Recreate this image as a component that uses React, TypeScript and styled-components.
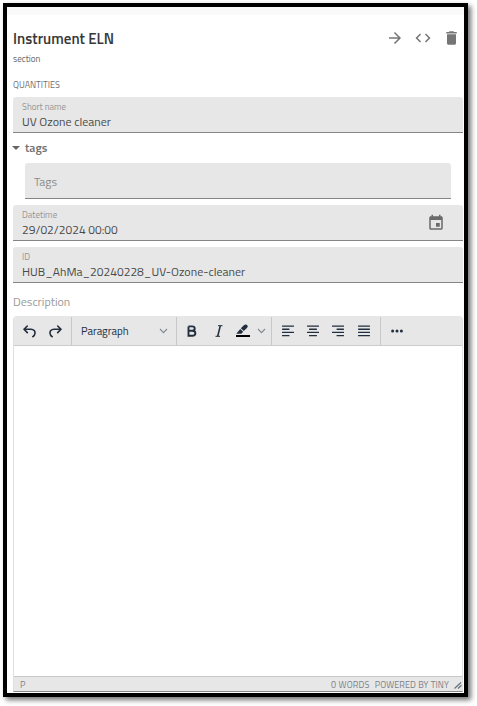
import React from "react";
import styled, { createGlobalStyle } from "styled-components";

const GlobalStyle = createGlobalStyle`
  body { margin: 0; background: #fff; }
  * { box-sizing: border-box; }
`;

const Page = styled.div`
  width: 477px;
  height: 706px;
  padding: 3px;
  overflow: hidden;
  background: #fff;
  font-family: "Titillium Web", Roboto, sans-serif;
`;

const Frame = styled.main`
  width: 465px;
  height: 694px;
  border: 4px solid #000;
  background: #fff;
  box-shadow: 3px 3px 5px rgba(0, 0, 0, 0.55);
  display: flex;
  flex-direction: column;
`;

const TopStrip = styled.div`
  height: 8px;
  flex: none;
  background: #fafafa;
`;

const Content = styled.div`
  flex: 1;
  min-height: 0;
  padding: 0 1px 1px 6px;
  display: flex;
  flex-direction: column;
`;

const Text = styled.span<{ $size: number; $color: string; $track?: number; $weight?: number }>`
  display: block;
  white-space: nowrap;
  font-size: ${(p) => p.$size}px;
  color: ${(p) => p.$color};
  letter-spacing: ${(p) => p.$track ?? 0}px;
  font-weight: ${(p) => p.$weight ?? 400};
`;

const Header = styled.header`
  display: flex;
  justify-content: space-between;
  height: 36px;
  padding: 13px 2px 0 0;
  line-height: 22px;
`;

const Actions = styled.div`
  display: flex;
  align-items: center;
  height: 20px;
  gap: 10px;
  color: #757575;
  svg { display: block; }
`;

const Subtitle = styled.div`
  height: 26px;
  padding-top: 1px;
  line-height: 14px;
`;

const GroupLabel = styled.div`
  height: 20px;
  padding-top: 1px;
  line-height: 14px;
`;

const Field = styled.div`
  display: flex;
  justify-content: space-between;
  height: 36px;
  flex: none;
  padding: 4px 18px 0 9px;
  border-radius: 3px 3px 0 0;
  border-bottom: 1px solid #858585;
  background: #e7e7e7;
  margin-bottom: 6px;
  svg { display: block; margin-top: 5px; }
`;

const FieldText = styled.div`
  span:first-child { line-height: 12px; }
  span:last-child { line-height: 18px; }
`;

const TagsHeader = styled.div`
  display: flex;
  align-items: center;
  height: 24px;
  padding-bottom: 8px;
  gap: 5px;
  flex: none;
  svg { margin-left: -1px; margin-top: 2px; }
`;

const TagsField = styled(Field)`
  margin-left: 12px;
  margin-right: 12px;
  padding-top: 2px;
  align-items: center;
`;

const DescriptionLabel = styled.div`
  height: 27px;
  flex: none;
  padding-top: 4px;
  line-height: 18px;
`;

const Editor = styled.section`
  flex: 1;
  min-height: 0;
  display: flex;
  flex-direction: column;
  border: 1px solid #e0e0e0;
  border-top: 0;
  border-bottom-color: #888;
  border-radius: 4px 4px 0 0;
  overflow: hidden;
`;

const Toolbar = styled.div`
  height: 30px;
  flex: none;
  display: flex;
  background: #e7e7e7;
  border-bottom: 1px solid #ccc;
  color: #222f3e;
`;

const ToolGroup = styled.div<{ $width: number }>`
  width: ${(p) => p.$width}px;
  flex: none;
  display: flex;
  align-items: center;
  border-right: 1px solid #c8c8c8;
  margin-top: 1px;
  &:last-child { border-right: 0; }
`;

const Tool = styled.div<{ $width: number }>`
  width: ${(p) => p.$width}px;
  display: flex;
  justify-content: center;
  flex: none;
  svg { display: block; }
`;

const BlockFormat = styled.div`
  flex: 1;
  display: flex;
  align-items: center;
  justify-content: space-between;
  padding: 0 8px 0 9px;
`;

const Canvas = styled.div`
  flex: 1;
  background: #fff;
`;

const StatusBar = styled.div`
  display: flex;
  align-items: center;
  height: 15px;
  flex: none;
  border-top: 1px solid #c8c8c8;
  background: #e7e7e7;
  padding: 1px 0 0 6px;
  line-height: 14px;
`;

const StatusRight = styled.div`
  margin-left: auto;
  display: flex;
  align-items: center;
  gap: 5px;
`;

const Chevron = () => (
  <svg width="9" height="6" viewBox="0 0 9 6" fill="none" stroke="#808890" strokeWidth="1.1">
    <path d="M1 1l3.5 3.6L8 1" />
  </svg>
);

const Lines = ({ rows }: { rows: [number, number][] }) => (
  <svg width="12" height="12" viewBox="0 0 12 12" fill="#222f3e">
    {rows.map(([x, w], i) => (
      <rect key={i} x={x} y={[0.4, 3.6, 6.7, 9.9][i]} width={w} height="1.4" rx=".4" />
    ))}
  </svg>
);

const alignments: [number, number][][] = [
  [[0, 12], [0, 7.5], [0, 12], [0, 7.5]],
  [[0, 12], [2, 8], [0, 12], [2, 8]],
  [[0, 12], [4.5, 7.5], [0, 12], [4.5, 7.5]],
  [[0, 12], [0, 12], [0, 12], [0, 12]],
];

type ValueFieldProps = { label: string; value: string; children?: React.ReactNode };

const ValueField = ({ label, value, children }: ValueFieldProps) => (
  <Field>
    <FieldText>
      <Text $size={9} $color="#959595">{label}</Text>
      <Text $size={12} $color="#4a4a4a">{value}</Text>
    </FieldText>
    {children}
  </Field>
);

export default function App() {
  return (
    <Page>
      <GlobalStyle />
      <Frame>
        <TopStrip />
        <Content>
          <Header>
            <Text $size={15} $color="#383838" $weight={600}>Instrument ELN</Text>
            <Actions>
              <svg width="18" height="18" viewBox="0 0 24 24" fill="currentColor">
                <path d="M12 4l-1.410 1.410L16.170 11H4v2h12.170l-5.580 5.590L12 20l8-8z" />
              </svg>
              <svg width="18" height="18" viewBox="0 0 24 24" fill="currentColor">
                <path d="M9.400 16.600L4.800 12l4.600-4.600L8 6l-6 6 6 6 1.400-1.400zm5.200 0l4.600-4.600-4.600-4.600L16 6l6 6-6 6-1.400-1.400z" />
              </svg>
              <svg width="19" height="18" viewBox="0 0 24 24" fill="currentColor">
                <path d="M6 19c0 1.100.9 2 2 2h8c1.100 0 2-.9 2-2V7H6v12zM19 4h-3.500l-1-1h-5l-1 1H5v2h14V4z" />
              </svg>
            </Actions>
          </Header>
          <Subtitle>
            <Text $size={9} $color="#666">section</Text>
          </Subtitle>
          <GroupLabel>
            <Text $size={9} $color="#707070">QUANTITIES</Text>
          </GroupLabel>

          <ValueField label="Short name" value="UV Ozone cleaner" />

          <TagsHeader>
            <svg width="8" height="4" viewBox="0 0 8 4" fill="#666">
              <path d="M0 0h8L4 4z" />
            </svg>
            <Text $size={12} $color="#707070" $weight={600}>tags</Text>
          </TagsHeader>
          <TagsField>
            <Text $size={12} $color="#8b8b8b">Tags</Text>
          </TagsField>

          <ValueField label="Datetime" value="29/02/2024 00:00">
            <svg width="18" height="18" viewBox="0 0 24 24" fill="#6b6b6b">
              <path d="M17 12h-5v5h5v-5zM16 1v2H8V1H6v2H5c-1.110 0-2 .9-2 2v14c0 1.100.89 2 2 2h14c1.100 0 2-.9 2-2V5c0-1.100-.9-2-2-2h-1V1h-2zm3 18H5V8h14v11z" />
            </svg>
          </ValueField>
          <ValueField label="ID" value="HUB_AhMa_20240228_UV-Ozone-cleaner" />

          <DescriptionLabel>
            <Text $size={12} $color="#999">Description</Text>
          </DescriptionLabel>

          <Editor>
            <Toolbar>
              <ToolGroup $width={58}>
                <Tool $width={31}>
                  <svg width="13" height="13" viewBox="0 0 13 13" fill="none" stroke="currentColor" strokeWidth="1.600" strokeLinecap="round" strokeLinejoin="round">
                    <path d="M4.300 1L1 4.300 4.300 7.600M1.200 4.300H8C11 4.300 12.200 6.300 12 8.300c-.1 1.500-.9 2.700-2.200 3.400" />
                  </svg>
                </Tool>
                <Tool $width={21}>
                  <svg width="13" height="13" viewBox="0 0 13 13" fill="none" stroke="currentColor" strokeWidth="1.600" strokeLinecap="round" strokeLinejoin="round">
                    <path d="M8.700 1L12 4.300 8.700 7.600M11.800 4.300H5C2 4.300.8 6.300 1 8.300c.1 1.500.9 2.700 2.200 3.400" />
                  </svg>
                </Tool>
              </ToolGroup>
              <ToolGroup $width={105}>
                <BlockFormat>
                  <Text $size={11} $color="#222f3e" $track={-0.05}>Paragraph</Text>
                  <Chevron />
                </BlockFormat>
              </ToolGroup>
              <ToolGroup $width={95}>
                <Tool $width={30}>
                  <svg width="10" height="12" viewBox="0 0 10 12" fill="none" stroke="currentColor" strokeWidth="1.900">
                    <path d="M1.500 1.400h3.600c3.500 0 3.500 4.400 0 4.400H1.500m3.800 0c4.100 0 4.100 4.900 0 4.900H1.500V1.400" />
                  </svg>
                </Tool>
                <Tool $width={23}>
                  <svg width="8" height="12" viewBox="0 0 8 12" fill="none" stroke="currentColor" strokeWidth="1">
                    <path d="M3 .7h4.500M.5 11.300H5" />
                    <path d="M5.300.7L2.700 11.300" strokeWidth="1.500" />
                  </svg>
                </Tool>
                <Tool $width={25}>
                  <svg width="15" height="14" viewBox="0 0 15 14" fill="currentColor">
                    <path d="M5.800 4.300L8.900 1.300C9.900.3 11.200.2 12.100 1s.8 2.100-.2 3.100L8.800 7.100zM5.200 4.900L8.200 7.700 6.400 9.700H1.300z" />
                    <rect x="1" y="11" width="14" height="2" fill="#000" />
                  </svg>
                </Tool>
                <Tool $width={13}>
                  <Chevron />
                </Tool>
              </ToolGroup>
              <ToolGroup $width={109}>
                <Tool $width={3} />
                {alignments.map((rows, i) => (
                  <Tool key={i} $width={25.4}>
                    <Lines rows={rows} />
                  </Tool>
                ))}
              </ToolGroup>
              <ToolGroup $width={60}>
                <Tool $width={32}>
                  <svg width="12" height="4" viewBox="0 0 12 4" fill="currentColor">
                    <circle cx="1.600" cy="2" r="1.500" />
                    <circle cx="6" cy="2" r="1.500" />
                    <circle cx="10.400" cy="2" r="1.500" />
                  </svg>
                </Tool>
              </ToolGroup>
            </Toolbar>
            <Canvas />
            <StatusBar>
              <Text $size={9} $color="#7b8087">P</Text>
              <StatusRight>
                <Text $size={9} $color="#7b8087" $track={0.2}>0 WORDS</Text>
                <Text $size={9} $color="#7b8087" $track={0.12}>POWERED BY TINY</Text>
                <svg width="8" height="8" viewBox="0 0 8 8" stroke="#68717a" strokeWidth="1.200">
                  <path d="M.5 7.500l6.500-6M4 7.500l3.500-3.200" />
                </svg>
              </StatusRight>
            </StatusBar>
          </Editor>
        </Content>
      </Frame>
    </Page>
  );
}
